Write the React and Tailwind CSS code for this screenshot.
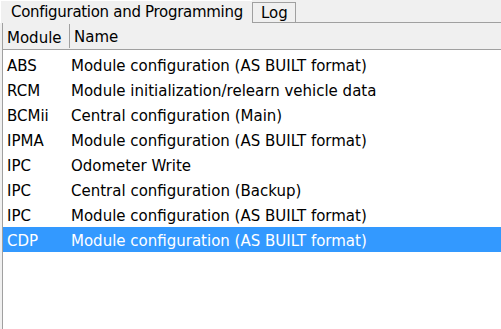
import React from "react";

const rows = [
  ["ABS", "Module configuration (AS BUILT format)"],
  ["RCM", "Module initialization/relearn vehicle data"],
  ["BCMii", "Central configuration (Main)"],
  ["IPMA", "Module configuration (AS BUILT format)"],
  ["IPC", "Odometer Write"],
  ["IPC", "Central configuration (Backup)"],
  ["IPC", "Module configuration (AS BUILT format)"],
  ["CDP", "Module configuration (AS BUILT format)"],
];

export default function App() {
  return (
    <div
      className="w-[501px] h-[329px] overflow-hidden bg-[#f0f0f0] flex flex-col text-[15px] text-black whitespace-nowrap"
      style={{ fontFamily: "'DejaVu Sans', Verdana, sans-serif" }}
    >
      <div className="flex h-[23px] shrink-0">
        <div className="h-[23px] w-[252px] pl-[10px] pt-[1px] leading-[20px] tracking-[-0.3px] border-l border-t border-[#ffffff] bg-[#f0f0f0]">
          Configuration and Programming
        </div>
        <div className="flex flex-col w-[44px]">
          <div className="mt-[2px] h-[20px] border-l border-r border-t border-[#a0a0a0] pl-[8px] leading-[21px] bg-[#f0f0f0]">
            Log
          </div>
          <div className="h-px bg-[#a0a0a0]" />
        </div>
        <div className="flex-1 flex flex-col justify-end">
          <div className="h-px bg-[#a0a0a0]" />
        </div>
      </div>
      <div className="flex-1 flex flex-col ml-[2px] border-l border-[#a0a0a0] bg-white">
        <div className="flex h-[27px] shrink-0 bg-[#f0f0f0] border-b border-[#a0a0a0]">
          <div className="w-[67px] pl-[4px] leading-[29px] border-r border-[#a0a0a0] my-[1px]">
            Module
          </div>
          <div className="pl-[4px] leading-[29px]">Name</div>
        </div>
        <div className="flex flex-col pt-[2px]">
          {rows.map(([m, n], i) => {
            const sel = i === rows.length - 1;
            return (
              <div
                key={i}
                className={
                  "flex h-[25px] leading-[28px] " +
                  (sel ? "bg-[#3399ff] text-white" : "")
                }
              >
                <div className="w-[68px] pl-[4px]">{m}</div>
                <div>{n}</div>
              </div>
            );
          })}
        </div>
      </div>
    </div>
  );
}
